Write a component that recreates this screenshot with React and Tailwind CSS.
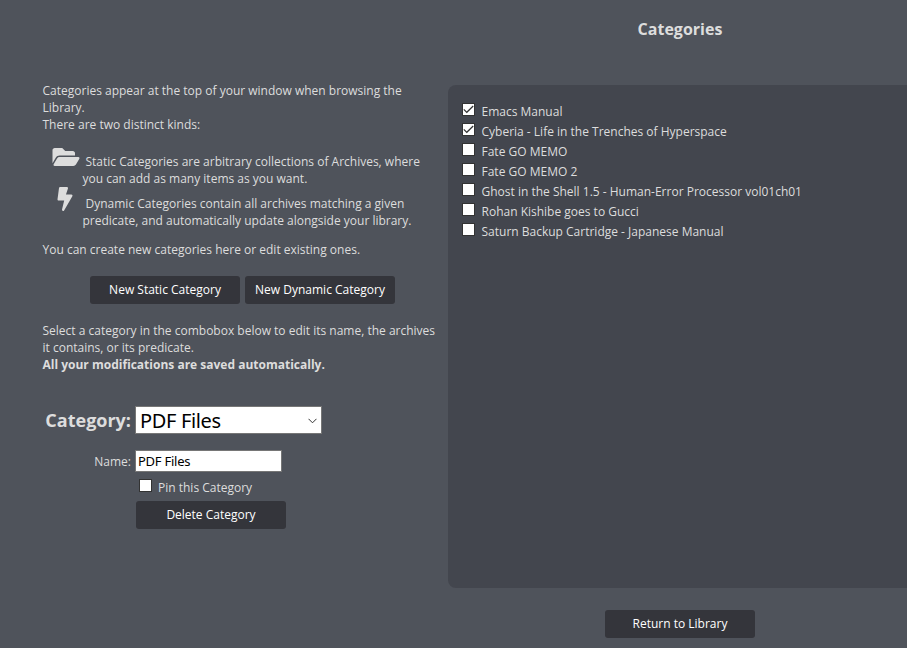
const archives = [
  { title: 'Emacs Manual', checked: true },
  { title: 'Cyberia - Life in the Trenches of Hyperspace', checked: true },
  { title: 'Fate GO MEMO', checked: false },
  { title: 'Fate GO MEMO 2', checked: false },
  { title: 'Ghost in the Shell 1.5 - Human-Error Processor vol01ch01', checked: false },
  { title: 'Rohan Kishibe goes to Gucci', checked: false },
  { title: 'Saturn Backup Cartridge - Japanese Manual', checked: false },
];

function Checkbox({ checked }) {
  return (
    <span className="block h-[13px] w-[13px] shrink-0 border border-[#333333] bg-white">
      {checked && (
        <svg viewBox="0 0 11 11" className="block h-[11px] w-[11px]" fill="none" stroke="#333" strokeWidth="1.2">
          <path d="M0.800 5.300 L3.800 8.300 L10.200 2" />
        </svg>
      )}
    </span>
  );
}

function Button({ children }) {
  return (
    <button className="block h-7 w-[150px] rounded-[3px] bg-[#34353b] pb-px text-center text-[12px] leading-[26px] whitespace-nowrap text-white">
      {children}
    </button>
  );
}

export default function App() {
  return (
    <div className="flex h-[648px] w-[907px] flex-col overflow-hidden bg-[#4f535b] font-['Open_Sans','Noto_Sans',sans-serif] text-[12px] leading-[17px] whitespace-nowrap text-[#dddddd]">
      <h1 className="ml-[453px] mt-[17px] h-[68px] w-[454px] text-center text-[16px] leading-6 font-bold">Categories</h1>
      <div className="flex h-[503px]">
        <div className="w-[448px] shrink-0 pl-[42px]">
          <p className="-mt-[3px] pl-[0.5px]">
            Categories appear at the top of your window when browsing the<br />
            Library.<br />
            There are two distinct kinds:
          </p>
          <ul className="mt-5">
            <li className="flex h-[42px]">
              <svg viewBox="0 0 576 512" className="-mt-[8px] ml-[10px] h-6 w-[28px] shrink-0" fill="#dddddd">
                <path d="M572.694 292.093L500.27 416.248A63.997 63.997 0 0 1 444.989 448H45.025c-18.523 0-30.064-20.093-20.731-36.093l72.424-124.155A64 64 0 0 1 152 256h399.964c18.523 0 30.064 20.093 20.73 36.093zM152 224h328v-48c0-26.51-21.49-48-48-48H272l-64-64H48C21.49 64 0 85.490 0 112v278.046l69.077-118.418C86.214 242.250 117.989 224 152 224z" />
              </svg>
              <p className="ml-[2.5px]">
                <span className="ml-[3px]">Static Categories are arbitrary collections of Archives, where</span><br />
                you can add as many items as you want.
              </p>
            </li>
            <li className="flex h-[46px]">
              <svg viewBox="0 0 320 512" className="-mt-[8px] ml-[15px] h-6 w-4 shrink-0" fill="#dddddd">
                <path d="M296 160H180.600l42.600-129.800C227.200 15 215.700 0 200 0H56C44 0 33.800 8.900 32.200 20.800l-32 240C-1.700 275.200 9.500 288 24 288h118.700L96.600 482.500c-3.600 15.200 8 29.500 23.300 29.500 8.400 0 16.400-4.400 20.800-12l176-304c9.300-15.900-2.200-36-20.700-36z" />
              </svg>
              <p className="ml-[9.5px]">
                <span className="ml-[3px]">Dynamic Categories contain all archives matching a given</span><br />
                predicate, and automatically update alongside your library.
              </p>
            </li>
          </ul>
          <p className="pl-[0.5px]">You can create new categories here or edit existing ones.</p>
          <div className="mt-[18px] ml-12 flex gap-[5px]">
            <Button>New Static Category</Button>
            <Button>New Dynamic Category</Button>
          </div>
          <p className="mt-[18px] pl-[0.5px]">
            Select a category in the combobox below to edit its name, the archives<br />
            it contains, or its predicate.<br />
            <b>All your modifications are saved automatically.</b>
          </p>
          <div className="mt-[33px] flex h-7 items-center">
            <label className="w-[89px] text-right text-[18px] font-bold">Category:</label>
            <div className="ml-1 flex h-7 w-[187px] items-center justify-between border border-[#767676] bg-white pr-1 pl-1 font-['Noto_Sans'] text-[20px] tracking-[-0.35px] text-black">
              <span>PDF Files</span>
              <svg viewBox="0 0 9 6" className="mt-px h-[6px] w-[9px]" fill="none" stroke="#333" strokeWidth="1">
                <path d="M0.500 0.800 L4.500 4.800 L8.500 0.800" />
              </svg>
            </div>
          </div>
          <div className="mt-4 flex h-[22px] items-center">
            <label className="w-[89px] text-right">Name:</label>
            <div className="ml-1 flex h-[22px] w-[147px] items-center border border-[#767676] bg-white pl-[2px] font-['Noto_Sans'] text-[13px] tracking-[-0.25px] text-black">PDF Files</div>
          </div>
          <div className="mt-[7px] ml-[97px] flex h-[22px]">
            <Checkbox />
            <span className="ml-[6px]">Pin this Category</span>
          </div>
          <div className="ml-[94px]">
            <Button>Delete Category</Button>
          </div>
        </div>
        <div className="flex-1 rounded-l-[8px] bg-[#43464e] pt-4 pl-[14px]">
          {archives.map((archive) => (
            <div key={archive.title} className="flex h-5">
              <div className="pt-[2px]">
                <Checkbox checked={archive.checked} />
              </div>
              <span className="ml-[6.5px] leading-[21px]">{archive.title}</span>
            </div>
          ))}
        </div>
      </div>
      <div className="mt-[22px] ml-[605px]">
        <Button>Return to Library</Button>
      </div>
    </div>
  );
}
